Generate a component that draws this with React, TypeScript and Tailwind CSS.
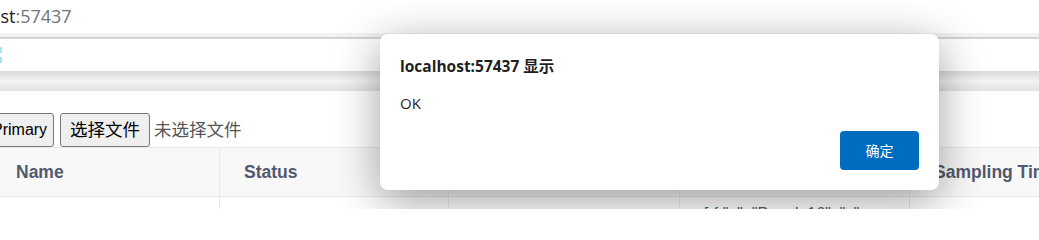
import React from "react";

const columns = [
  { label: "Name", width: "w-[228px]" },
  { label: "Status", width: "w-[229px]" },
  { label: "", width: "w-[231px]" },
  { label: "", width: "w-[230px]" },
  { label: "Sampling Time", width: "w-[200px]" },
];

function AlertDialog() {
  return (
    <div className="absolute left-[380px] top-[34px] w-[559px] h-[156px] bg-white rounded-[8px] shadow-[0_10px_45px_rgba(0,0,0,0.38)] px-[20px] pt-[20px] flex flex-col font-['Open_Sans','Noto_Sans_CJK_SC',sans-serif] text-[#1f1f1f]">
      <h1 className="text-[15.5px] font-bold leading-[24px]">localhost:57437 显示</h1>
      <p className="mt-[14px] text-[15px] leading-[22px]">OK</p>
      <div className="flex justify-end mt-auto mb-[20px]">
        <button className="w-[79px] h-[39px] rounded-[4px] bg-[#006cbf] text-white text-[14px]">
          确定
        </button>
      </div>
    </div>
  );
}

export default function App() {
  return (
    <div className="relative w-[1039px] h-[209px] overflow-hidden bg-white">
      {/* address bar */}
      <div className="h-[33px] flex items-center overflow-hidden font-['Open_Sans',sans-serif] text-[18px]">
        <span className="ml-[-60px] text-[#202124]">localhost</span>
        <span className="text-[#70757a]">:57437</span>
      </div>

      {/* toolbar strip */}
      <div className="h-[4px] bg-[#f2f2f2]" />
      <div className="h-[2px] bg-[#d2d2d2]" />
      <div className="h-[32px] bg-white relative">
        <div className="absolute left-0 top-[8px] h-[16px] border-l-2 border-dashed border-[#a8e4f5]" />
      </div>
      <div className="h-[20px] bg-linear-to-b from-[#d9d9db] via-[#f4f4f6] to-[#e2e2e4]" />

      {/* page content, scrolled slightly to the right */}
      <div className="ml-[-9px] font-['Liberation_Sans','Noto_Sans_CJK_SC',sans-serif]">
        <div className="h-[22px]" />
        <div className="h-[34px] flex items-center text-[17.5px] text-black">
          <button className="h-[34px] px-[6px] ml-[-6px] border border-[#767676] rounded-[3px] bg-[#efefef] text-[16px]">
            Primary
          </button>
          <button className="h-[34px] ml-[6px] px-[9px] border border-[#767676] rounded-[3px] bg-[#efefef]">
            选择文件
          </button>
          <span className="ml-[4px] text-[#555]">未选择文件</span>
        </div>

        <table className="table-fixed w-[1118px] border-collapse text-[17.5px] text-[#515a6e]">
          <thead>
            <tr className="bg-[#f8f8f9]">
              {columns.map((c, i) => (
                <th
                  key={i}
                  className={`${c.width} h-[49px] px-[24px] text-left font-bold border border-[#e8eaec] whitespace-nowrap overflow-hidden`}
                >
                  {c.label}
                </th>
              ))}
            </tr>
          </thead>
          <tbody>
            <tr>
              <td className="h-[40px] border border-[#e8eaec]" />
              <td className="border border-[#e8eaec]" />
              <td className="border border-[#e8eaec]" />
              <td className="border border-[#e8eaec] px-[24px] align-top pt-[5px] whitespace-nowrap overflow-hidden text-[16px]">
                [ {"{"} "p": "People16", "c":
              </td>
              <td className="border border-[#e8eaec]" />
            </tr>
          </tbody>
        </table>
      </div>

      <AlertDialog />
    </div>
  );
}
